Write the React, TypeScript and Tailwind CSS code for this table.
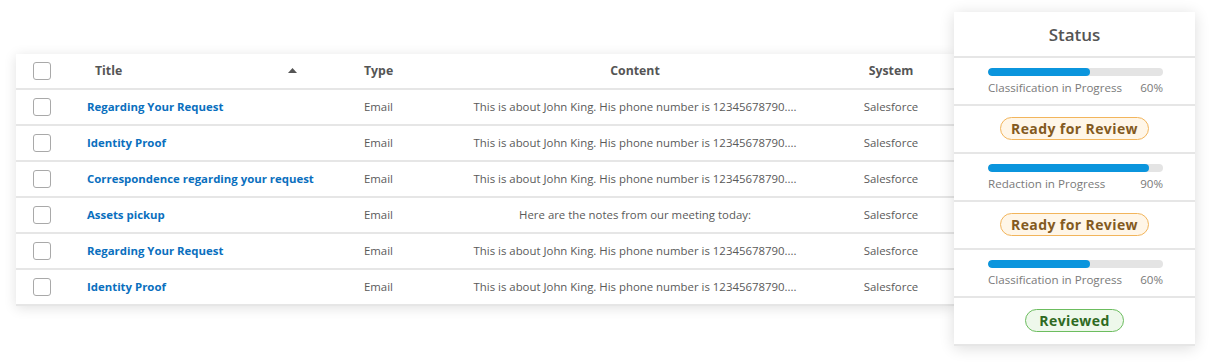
import React from 'react';

type Row = { title: string; type: string; content: string; system: string };

const rows: Row[] = [
  { title: 'Regarding Your Request', type: 'Email', content: 'This is about John King. His phone number is 12345678790....', system: 'Salesforce' },
  { title: 'Identity Proof', type: 'Email', content: 'This is about John King. His phone number is 12345678790....', system: 'Salesforce' },
  { title: 'Correspondence regarding your request', type: 'Email', content: 'This is about John King. His phone number is 12345678790....', system: 'Salesforce' },
  { title: 'Assets pickup', type: 'Email', content: 'Here are the notes from our meeting today:', system: 'Salesforce' },
  { title: 'Regarding Your Request', type: 'Email', content: 'This is about John King. His phone number is 12345678790....', system: 'Salesforce' },
  { title: 'Identity Proof', type: 'Email', content: 'This is about John King. His phone number is 12345678790....', system: 'Salesforce' },
];

type Status =
  | { kind: 'progress'; label: string; pct: number }
  | { kind: 'review' }
  | { kind: 'reviewed' };

const statuses: Status[] = [
  { kind: 'progress', label: 'Classification in Progress', pct: 60 },
  { kind: 'review' },
  { kind: 'progress', label: 'Redaction in Progress', pct: 90 },
  { kind: 'review' },
  { kind: 'progress', label: 'Classification in Progress', pct: 60 },
  { kind: 'reviewed' },
];

const gridCols = 'grid grid-cols-[71px_277px_66px_410px_102px_1fr] items-center';

const Checkbox = () => (
  <span className="block w-[18px] h-[18px] rounded-[3px] border-[1.5px] border-[#a9a9a9] bg-white" />
);

const StatusCell = ({ s }: { s: Status }) => {
  if (s.kind === 'progress') {
    return (
      <div className="pl-[34px] pr-[32px] pt-[10px]">
        <div className="h-[8px] w-full rounded-full bg-[#e4e4e4] overflow-hidden">
          <div className="h-full rounded-full bg-[#0b95dd]" style={{ width: `${s.pct < 80 ? 58 : 92}%` }} />
        </div>
        <div className="flex justify-between mt-[4px] text-[11.6px] leading-[16px] text-[#7a7a7a]">
          <span>{s.label}</span>
          <span>{s.pct}%</span>
        </div>
      </div>
    );
  }
  if (s.kind === 'review') {
    return (
      <div className="flex justify-center items-center h-full pb-[2px]">
        <span className="px-[10px] h-[23px] flex items-center rounded-full border-[1.5px] border-[#f2b55c] bg-[#fff6e8] text-[#835a1f] text-[14px] font-bold tracking-[0.4px]">
          Ready for Review
        </span>
      </div>
    );
  }
  return (
    <div className="flex justify-center items-center h-full pb-[2px]">
      <span className="px-[13px] h-[23px] flex items-center rounded-full border-[1.5px] border-[#6cbd5f] bg-[#eef8eb] text-[#2f6a22] text-[14px] font-bold tracking-[0.4px]">
        Reviewed
      </span>
    </div>
  );
};

export default function App() {
  return (
    <div className="w-[1212px] h-[362px] bg-white flex items-start pl-4 font-['Open_Sans',sans-serif]">
      {/* documents table */}
      <div className="mt-[54px] w-[938px] bg-white shadow-[0_2px_12px_rgba(0,0,0,0.12)]">
        <div className={`${gridCols} h-[36px] border-b-2 border-[#e6e6e6] text-[12.3px] font-bold text-[#555]`}>
          <div className="pl-[17px]"><Checkbox /></div>
          <div className="flex items-center justify-between pl-[8px] pr-[67px]">
            <span>Title</span>
            <svg width="9" height="5" viewBox="0 0 9 5" className="mt-[-1px]">
              <path d="M0 5 L4.5 0 L9 5 Z" fill="#555" />
            </svg>
          </div>
          <div>Type</div>
          <div className="text-center">Content</div>
          <div className="text-center">System</div>
          <div />
        </div>
        {rows.map((r, i) => (
          <div key={i} className={`${gridCols} h-[36px] border-b-2 border-[#e6e6e6] text-[11.4px] text-[#5a5a5a]`}>
            <div className="pl-[17px]"><Checkbox /></div>
            <div className="font-bold text-[#0a6fbe]">{r.title}</div>
            <div>{r.type}</div>
            <div className="text-center">{r.content}</div>
            <div className="text-center">{r.system}</div>
            <div />
          </div>
        ))}
      </div>

      {/* status column */}
      <div className="mt-[12px] w-[241px] bg-white shadow-[0_2px_14px_rgba(0,0,0,0.14)]">
        <div className="h-[46px] flex items-center justify-center pt-[1px] border-b-2 border-[#e6e6e6] text-[17px] font-semibold text-[#555]">
          Status
        </div>
        {statuses.map((s, i) => (
          <div key={i} className="h-[48px] border-b-2 border-[#e6e6e6]">
            <StatusCell s={s} />
          </div>
        ))}
      </div>
    </div>
  );
}
